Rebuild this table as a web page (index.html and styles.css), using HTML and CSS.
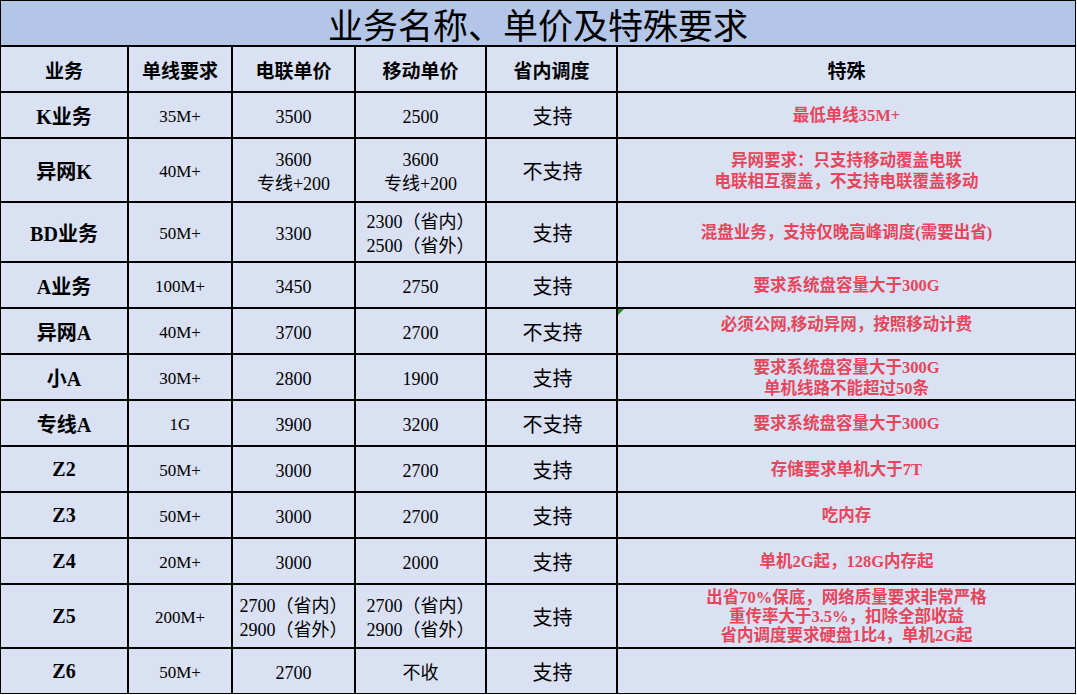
FILE: index.html
```html
<!DOCTYPE html>
<html lang="zh-CN">
<head>
<meta charset="utf-8">
<title>业务名称、单价及特殊要求</title>
<link rel="stylesheet" href="styles.css">
</head>
<body>
<div class="sheet">
  <div class="c title">业务名称、单价及特殊要求</div>

  <div class="c hd">业务</div>
  <div class="c hd">单线要求</div>
  <div class="c hd">电联单价</div>
  <div class="c hd">移动单价</div>
  <div class="c hd">省内调度</div>
  <div class="c hd last">特殊</div>

  <div class="c name">K业务</div>
  <div class="c req">35M+</div>
  <div class="c num">3500</div>
  <div class="c num">2500</div>
  <div class="c sup">支持</div>
  <div class="c note last">最低单线35M+</div>

  <div class="c name">异网K</div>
  <div class="c req">40M+</div>
  <div class="c num two">3600<br>专线+200</div>
  <div class="c num two">3600<br>专线+200</div>
  <div class="c sup">不支持</div>
  <div class="c note last">异网要求：只支持移动覆盖电联<br>电联相互覆盖，不支持电联覆盖移动</div>

  <div class="c name">BD业务</div>
  <div class="c req">50M+</div>
  <div class="c num">3300</div>
  <div class="c num two">2300（省内）<br>2500（省外）</div>
  <div class="c sup">支持</div>
  <div class="c note last">混盘业务，支持仅晚高峰调度(需要出省)</div>

  <div class="c name">A业务</div>
  <div class="c req">100M+</div>
  <div class="c num">3450</div>
  <div class="c num">2750</div>
  <div class="c sup">支持</div>
  <div class="c note last">要求系统盘容量大于300G</div>

  <div class="c name">异网A</div>
  <div class="c req">40M+</div>
  <div class="c num">3700</div>
  <div class="c num">2700</div>
  <div class="c sup">不支持</div>
  <div class="c note last top"><span class="flag"></span>必须公网,移动异网，按照移动计费</div>

  <div class="c name">小A</div>
  <div class="c req">30M+</div>
  <div class="c num">2800</div>
  <div class="c num">1900</div>
  <div class="c sup">支持</div>
  <div class="c note last">要求系统盘容量大于300G<br>单机线路不能超过50条</div>

  <div class="c name">专线A</div>
  <div class="c req">1G</div>
  <div class="c num">3900</div>
  <div class="c num">3200</div>
  <div class="c sup">不支持</div>
  <div class="c note last">要求系统盘容量大于300G</div>

  <div class="c name">Z2</div>
  <div class="c req">50M+</div>
  <div class="c num">3000</div>
  <div class="c num">2700</div>
  <div class="c sup">支持</div>
  <div class="c note last">存储要求单机大于7T</div>

  <div class="c name">Z3</div>
  <div class="c req">50M+</div>
  <div class="c num">3000</div>
  <div class="c num">2700</div>
  <div class="c sup">支持</div>
  <div class="c note last">吃内存</div>

  <div class="c name">Z4</div>
  <div class="c req">20M+</div>
  <div class="c num">3000</div>
  <div class="c num">2000</div>
  <div class="c sup">支持</div>
  <div class="c note last">单机2G起，128G内存起</div>

  <div class="c name">Z5</div>
  <div class="c req">200M+</div>
  <div class="c num two">2700（省内）<br>2900（省外）</div>
  <div class="c num two">2700（省内）<br>2900（省外）</div>
  <div class="c sup">支持</div>
  <div class="c note last three">出省70%保底，网络质量要求非常严格<br>重传率大于3.5%，扣除全部收益<br>省内调度要求硬盘1比4，单机2G起</div>

  <div class="c name bot">Z6</div>
  <div class="c req bot">50M+</div>
  <div class="c num bot">2700</div>
  <div class="c num bot">不收</div>
  <div class="c sup bot">支持</div>
  <div class="c note last bot"></div>
</div>
</body>
</html>
```
FILE: styles.css
```css
html, body {
  margin: 0;
  padding: 0;
  background: #ffffff;
}

.sheet {
  display: grid;
  grid-template-columns: 128px 104px 123px 131px 131px 458px;
  grid-template-rows: 46px 46px 46px 64px 60px 46px 46px 46px 46px 46px 46px 46px 64px 45px;
  width: 1076px;
  box-sizing: border-box;
  border-left: 1px solid #000;
  border-top: 1px solid #000;
  font-family: "Liberation Serif", "Noto Sans CJK SC", serif;
  color: #000;
}

.c {
  box-sizing: border-box;
  border-right: 2px solid #000;
  border-bottom: 2px solid #000;
  background: #d9e1f2;
  display: flex;
  align-items: center;
  justify-content: center;
  text-align: center;
  white-space: nowrap;
  position: relative;
}

.c.last { border-right-width: 1px; }
.c.bot { border-bottom-width: 1px; }

.title {
  grid-column: 1 / -1;
  background: #b4c6e7;
  border-right-width: 1px;
  font-family: "Noto Sans CJK SC", sans-serif;
  font-size: 35px;
  line-height: 40px;
  padding-top: 2px;
}

.hd {
  font-family: "Noto Sans CJK SC", sans-serif;
  font-weight: 700;
  font-size: 19px;
}

.name {
  font-weight: 700;
  font-size: 20px;
}

.req {
  font-size: 17px;
  padding-top: 3px;
}

.num {
  font-size: 18px;
  line-height: 24px;
  padding-top: 3px;
}

.sup {
  font-family: "Noto Sans CJK SC", sans-serif;
  font-size: 20px;
  padding-left: 2px;
}

.note {
  color: #e6465b;
  font-weight: 700;
  font-size: 16.5px;
  line-height: 21px;
  padding-top: 1px;
}

.note.three { line-height: 19px; }

.note.top {
  align-items: flex-start;
  padding-top: 5px;
}

.flag {
  position: absolute;
  left: 0;
  top: 0;
  width: 0;
  height: 0;
  border-top: 6px solid #1e8b1e;
  border-right: 6px solid transparent;
}
```
